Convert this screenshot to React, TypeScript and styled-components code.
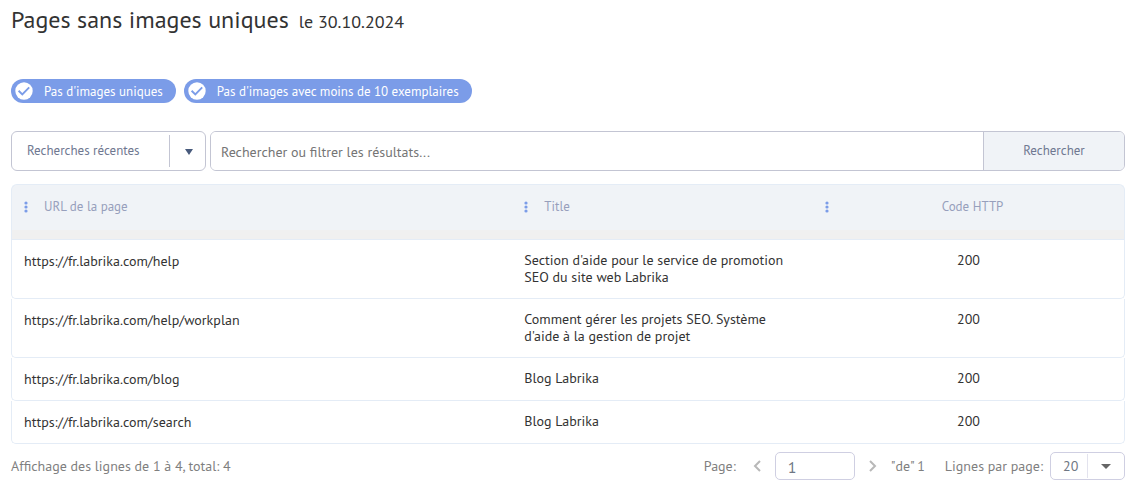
import React from 'react';
import styled, { createGlobalStyle } from 'styled-components';

const GlobalStyle = createGlobalStyle`
  *, *::before, *::after { box-sizing: border-box; }
  body {
    margin: 0;
    background: #fff;
    color: #333;
    font: 14px/17px "PT Sans", Lato, "Noto Sans", sans-serif;
  }
  button, input, select { font: inherit; color: inherit; margin: 0; }
`;

const Page = styled.main`
  padding: 7px 10px 20px 11px;
`;

const Heading = styled.h1`
  display: flex;
  align-items: baseline;
  gap: 10px;
  margin: 0;
  font-size: 24px;
  line-height: 26px;
  font-weight: 400;
`;

const HeadingDate = styled.span`
  font-size: 18px;
`;

const Chips = styled.div`
  display: flex;
  gap: 8px;
  margin-top: 44px;
`;

const Chip = styled.button`
  display: flex;
  align-items: center;
  gap: 11px;
  height: 24px;
  padding: 0 13px 0 4px;
  border: 0;
  border-radius: 12px;
  background: #7b9ce8;
  color: #fff;
  font-size: 13px;
  white-space: nowrap;
`;

const SearchBar = styled.form`
  display: flex;
  gap: 4px;
  margin-top: 28px;
  height: 40px;
`;

const Recent = styled.button`
  display: flex;
  align-items: center;
  flex: 0 0 195px;
  padding: 0;
  border: 1px solid #c3c5d3;
  border-radius: 6px;
  background: #fff;
  color: #6f7891;
  font-size: 13px;
  text-align: left;
`;

const RecentLabel = styled.span`
  flex: 1;
  padding: 0 0 2px 15px;
`;

const RecentArrow = styled.span`
  display: flex;
  align-items: center;
  justify-content: center;
  width: 36px;
  height: 32px;
  padding: 2px 0 0 3px;
  border-left: 1px solid #c3c5d3;
`;

const SearchGroup = styled.div`
  display: flex;
  flex: 1;
  overflow: hidden;
  border: 1px solid #c3c5d3;
  border-radius: 6px;
`;

const SearchInput = styled.input`
  flex: 1;
  min-width: 0;
  padding: 2px 10px 0;
  border: 0;
  outline: 0;
  background: #fff;
  &::placeholder { color: #757575; opacity: 1; }
`;

const SearchButton = styled.button`
  flex: 0 0 141px;
  padding: 0 0 2px;
  border: 0;
  border-left: 1px solid #c3c5d3;
  background: #f0f3f7;
  color: #6f7891;
  font-size: 13px;
`;

const Table = styled.table`
  width: 100%;
  margin-top: 13px;
  border-collapse: separate;
  border-spacing: 0;
  table-layout: fixed;
`;

const UrlCol = styled.col`width: 45%;`;
const TitleCol = styled.col`width: 27%;`;

const HeadCell = styled.th`
  height: 46px;
  padding: 0 12px 2px;
  border-top: 1px solid #e4ecf6;
  background: #f0f3f7;
  color: #979fbc;
  font-size: 13px;
  font-weight: 400;
  text-align: left;
  &:first-child { border-left: 1px solid #e4ecf6; border-top-left-radius: 6px; }
  &:last-child { border-right: 1px solid #e4ecf6; border-top-right-radius: 6px; }
`;

const HeadContent = styled.div<{ $center?: boolean }>`
  display: flex;
  align-items: center;
  gap: ${(p) => (p.$center ? 4 : 16)}px;
`;

const HeadLabel = styled.span<{ $center?: boolean }>`
  flex: 1;
  text-align: ${(p) => (p.$center ? 'center' : 'left')};
`;

const MenuButton = styled.button`
  display: flex;
  width: 4px;
  height: 12px;
  padding: 0;
  border: 0;
  background: none;
`;

const StripCell = styled.td`
  height: 10px;
  padding: 0;
  border: 1px solid #e4ecf6;
  border-top: 0;
  background: #f0f0f0;
`;

const Cell = styled.td<{ $center?: boolean }>`
  padding: 12px;
  border-bottom: 1px solid #e4ecf6;
  vertical-align: top;
  text-align: ${(p) => (p.$center ? 'center' : 'left')};
  &:first-child { border-left: 1px solid #e4ecf6; border-bottom-left-radius: 5px; }
  &:last-child { border-right: 1px solid #e4ecf6; border-bottom-right-radius: 5px; }
`;

const CellText = styled.div`
  max-width: 264px;
`;

const UrlLink = styled.a`
  display: block;
  line-height: 18px;
  color: inherit;
  text-decoration: none;
`;

const Footer = styled.footer`
  display: flex;
  align-items: center;
  margin-top: 8px;
  color: #7f7f7f;
  white-space: nowrap;
`;

const Summary = styled.span`
  flex: 1;
`;

const Pager = styled.div`
  display: flex;
  align-items: center;
  gap: 10px;
`;

const PageLabel = styled.label`
  padding-right: 3px;
`;

const ArrowButton = styled.button`
  display: flex;
  justify-content: center;
  width: 16px;
  padding: 0;
  border: 0;
  background: none;
`;

const PageInput = styled.input`
  width: 80px;
  height: 28px;
  padding: 1px 12px 0;
  border: 1px solid #cfcfe2;
  border-radius: 5px;
  outline: 0;
  background: #fff;
  color: #6f7784;
  font-size: 16px;
`;

const PerPage = styled.label`
  display: flex;
  align-items: center;
  gap: 7px;
  margin-left: 20px;
`;

const SelectBox = styled.span`
  display: grid;
  grid-template-columns: 36px 1fr;
  width: 75px;
  height: 28px;
  border: 1px solid #cfcfe2;
  border-radius: 5px;
`;

const Select = styled.select`
  grid-area: 1 / 1 / 2 / 3;
  appearance: none;
  padding: 0 0 0 12px;
  border: 0;
  outline: 0;
  background: transparent;
  color: #6f7784;
`;

const SelectArrow = styled.span`
  grid-area: 1 / 2;
  display: flex;
  align-items: center;
  justify-content: center;
  margin: 1px 0;
  border-left: 1px solid #e3e3ee;
  pointer-events: none;
`;

const CheckIcon = () => (
  <svg width="18" height="18" viewBox="0 0 18 18" aria-hidden="true">
    <circle cx="9" cy="9" r="8.7" fill="#fff" />
    <path d="M3.6 8.8l3.7 3.6 6.9-7" fill="none" stroke="#7b9ce8" strokeWidth="1.9" />
  </svg>
);

const DotsIcon = () => (
  <svg width="4" height="12" viewBox="0 0 4 12" aria-hidden="true" fill="#7b9ce8">
    <circle cx="2" cy="2" r="1.6" />
    <circle cx="2" cy="6" r="1.6" />
    <circle cx="2" cy="10" r="1.6" />
  </svg>
);

const Chevron = ({ next }: { next?: boolean }) => (
  <svg width="10" height="14" viewBox="0 0 10 14" aria-hidden="true">
    <path d={next ? 'M2 2l5 5-5 5' : 'M8 2L3 7l5 5'} fill="none" stroke="#b8b8b8" strokeWidth="2" />
  </svg>
);

const chips = ["Pas d'images uniques", "Pas d'images avec moins de 10 exemplaires"];

const rows = [
  { path: '/help', title: "Section d'aide pour le service de promotion SEO du site web Labrika", code: 200 },
  { path: '/help/workplan', title: "Comment gérer les projets SEO. Système d'aide à la gestion de projet", code: 200 },
  { path: '/blog', title: 'Blog Labrika', code: 200 },
  { path: '/search', title: 'Blog Labrika', code: 200 },
];

const columns = [{ label: 'URL de la page' }, { label: 'Title' }, { label: 'Code HTTP', center: true }];

export default function App() {
  return (
    <>
      <GlobalStyle />
      <Page>
        <Heading>
          Pages sans images uniques <HeadingDate>le 30.10.2024</HeadingDate>
        </Heading>
        <Chips>
          {chips.map((label) => (
            <Chip key={label} type="button" aria-pressed="true">
              <CheckIcon />
              {label}
            </Chip>
          ))}
        </Chips>
        <SearchBar onSubmit={(e) => e.preventDefault()}>
          <Recent type="button" aria-haspopup="listbox">
            <RecentLabel>Recherches récentes</RecentLabel>
            <RecentArrow>
              <svg width="8" height="6" viewBox="0 0 8 6" aria-hidden="true">
                <path d="M0 0h8L4 6z" fill="#485a7c" />
              </svg>
            </RecentArrow>
          </Recent>
          <SearchGroup>
            <SearchInput aria-label="Rechercher" placeholder="Rechercher ou filtrer les résultats..." />
            <SearchButton type="submit">Rechercher</SearchButton>
          </SearchGroup>
        </SearchBar>
        <Table>
          <colgroup>
            <UrlCol />
            <TitleCol />
            <col />
          </colgroup>
          <thead>
            <tr>
              {columns.map((c) => (
                <HeadCell key={c.label} scope="col">
                  <HeadContent $center={c.center}>
                    <MenuButton type="button" aria-label="Menu">
                      <DotsIcon />
                    </MenuButton>
                    <HeadLabel $center={c.center}>{c.label}</HeadLabel>
                  </HeadContent>
                </HeadCell>
              ))}
            </tr>
            <tr>
              <StripCell colSpan={3} />
            </tr>
          </thead>
          <tbody>
            {rows.map((r) => (
              <tr key={r.path}>
                <Cell>
                  <UrlLink href={`https://fr.labrika.com${r.path}`}>{`https://fr.labrika.com${r.path}`}</UrlLink>
                </Cell>
                <Cell>
                  <CellText>{r.title}</CellText>
                </Cell>
                <Cell $center>{r.code}</Cell>
              </tr>
            ))}
          </tbody>
        </Table>
        <Footer>
          <Summary>Affichage des lignes de 1 à 4, total: 4</Summary>
          <Pager>
            <PageLabel htmlFor="page">Page:</PageLabel>
            <ArrowButton type="button" aria-label="Page précédente">
              <Chevron />
            </ArrowButton>
            <PageInput id="page" defaultValue="1" />
            <ArrowButton type="button" aria-label="Page suivante">
              <Chevron next />
            </ArrowButton>
            <span>"de" 1</span>
          </Pager>
          <PerPage>
            Lignes par page:
            <SelectBox>
              <Select defaultValue="20">
                <option>20</option>
                <option>50</option>
                <option>100</option>
              </Select>
              <SelectArrow>
                <svg width="10" height="5" viewBox="0 0 10 5" aria-hidden="true">
                  <path d="M0 0h10L5 5z" fill="#666" />
                </svg>
              </SelectArrow>
            </SelectBox>
          </PerPage>
        </Footer>
      </Page>
    </>
  );
}
